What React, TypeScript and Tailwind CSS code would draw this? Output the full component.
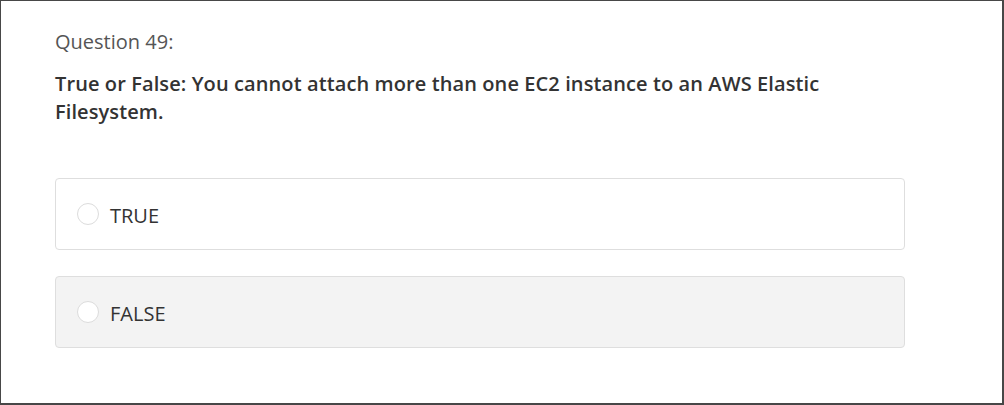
const options = [
  { label: "TRUE", shaded: false },
  { label: "FALSE", shaded: true },
];

export default function App() {
  return (
    <div className="h-[405px] w-[1004px] border-l border-t border-r-2 border-b-2 border-[#474747] bg-white font-['Open_Sans',sans-serif]">
      <div className="pl-[54px] pr-[97px] pt-[27px]">
        <p className="text-[20px] leading-[28px] text-[#555]">Question 49:</p>
        <p className="mt-[14px] text-[20px] font-semibold leading-[28px] tracking-[0.1px] text-[#333]">
          True or False: You cannot attach more than one EC2 instance to an AWS Elastic Filesystem.
        </p>
        <div className="mt-[52px] flex flex-col gap-[26px]">
          {options.map((o) => (
            <label
              key={o.label}
              className={`flex h-[72px] items-center gap-[11px] rounded-[4px] border border-[#dedede] px-[21px] ${
                o.shaded ? "bg-[#f3f3f3]" : "bg-white"
              }`}
            >
              <span className="h-[22px] w-[22px] shrink-0 rounded-full border border-[#dcdcdc] bg-white" />
              <span className="pt-[4px] text-[20px] text-[#333]">{o.label}</span>
            </label>
          ))}
        </div>
      </div>
    </div>
  );
}
